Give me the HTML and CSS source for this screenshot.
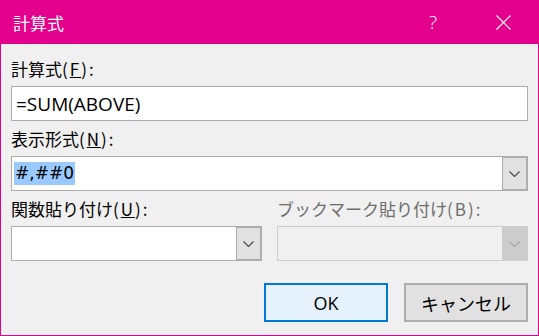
FILE: index.html
```html
<!DOCTYPE html>
<html lang="ja">
<head>
  <meta charset="UTF-8" />
  <title>計算式</title>
  <link rel="stylesheet" href="styles.css">
</head>
<body>
  <div class="dialog">
    <div class="titlebar">
      <span class="title">計算式</span>
      <div class="title-controls">
        <button class="tb-btn">?</button>
        <button class="tb-btn">
          <svg width="15" height="15" viewBox="0 0 15 15">
            <path d="M0.5 0.5 L14.5 14.5 M14.5 0.5 L0.5 14.5" stroke="#fff" stroke-width="1.2" fill="none"/>
          </svg>
        </button>
      </div>
    </div>

    <div class="content">
      <div class="field">
        <label>計算式<span class="key">(<u>F</u>):</span></label>
        <div class="textbox">=SUM(ABOVE)</div>
      </div>

      <div class="field">
        <label>表示形式<span class="key">(<u>N</u>):</span></label>
        <div class="combo">
          <div class="combo-value"><span class="selected">#,##0</span></div>
          <div class="combo-arrow">
            <svg width="11" height="6" viewBox="0 0 11 6"><path d="M0.5 0.5 L5.5 5.5 L10.5 0.5" stroke="#444" stroke-width="1.1" fill="none"/></svg>
          </div>
        </div>
      </div>

      <div class="field-row">
        <div class="field">
          <label>関数貼り付け<span class="key">(<u>U</u>):</span></label>
          <div class="combo">
            <div class="combo-value"></div>
            <div class="combo-arrow">
              <svg width="11" height="6" viewBox="0 0 11 6"><path d="M0.5 0.5 L5.5 5.5 L10.5 0.5" stroke="#444" stroke-width="1.1" fill="none"/></svg>
            </div>
          </div>
        </div>
        <div class="field disabled">
          <label>ブックマーク貼り付け<span class="key">(B):</span></label>
          <div class="combo">
            <div class="combo-value"></div>
            <div class="combo-arrow">
              <svg width="11" height="6" viewBox="0 0 11 6"><path d="M0.5 0.5 L5.5 5.5 L10.5 0.5" stroke="#a6a6a6" stroke-width="1.1" fill="none"/></svg>
            </div>
          </div>
        </div>
      </div>

      <div class="actions">
        <button class="btn btn-default">OK</button>
        <button class="btn">キャンセル</button>
      </div>
    </div>
  </div>
</body>
</html>
```

FILE: styles.css
```css
:root {
  --accent: #e3008c;
  --bg: #f0f0f0;
  --border: #adadad;
  --font-ui: "Open Sans", "Noto Sans CJK JP", sans-serif;
}

* {
  margin: 0;
  padding: 0;
  box-sizing: border-box;
}

body {
  background: var(--bg);
  font-family: var(--font-ui);
  color: #000;
}

.dialog {
  width: 539px;
  height: 336px;
  border: 1px solid var(--accent);
  border-top: none;
  background: var(--bg);
  display: flex;
  flex-direction: column;
}

.titlebar {
  height: 44px;
  background: var(--accent);
  display: flex;
  align-items: center;
  justify-content: space-between;
  padding-left: 12px;
}

.title {
  color: #fff;
  font-size: 17px;
  font-family: "Noto Sans CJK JP", sans-serif;
}

.title-controls {
  display: flex;
  height: 100%;
}

.tb-btn {
  width: 70px;
  height: 100%;
  background: transparent;
  border: none;
  color: #fff;
  font-family: "Open Sans", sans-serif;
  font-weight: 300;
  font-size: 19px;
  display: flex;
  align-items: center;
  justify-content: center;
}

.content {
  padding: 13px 10px 0;
  display: flex;
  flex-direction: column;
  gap: 6px;
}

.field {
  display: flex;
  flex-direction: column;
  gap: 5px;
}

.field label {
  font-family: "Noto Sans CJK JP", sans-serif;
  font-size: 17px;
  line-height: 24px;
  height: 24px;
  white-space: nowrap;
}

.key {
  letter-spacing: 2px;
}

.field.disabled label {
  color: #6d6d6d;
}

.textbox {
  height: 35px;
  border: 1px solid var(--border);
  background: #fff;
  padding-left: 4px;
  font-size: 19px;
  display: flex;
  align-items: center;
}

.combo {
  height: 35px;
  border: 1px solid var(--border);
  background: #fff;
  display: flex;
}

.combo-value {
  flex: 1;
  display: flex;
  align-items: center;
  padding-left: 2px;
}

.selected {
  background: #99c9ff;
  font-family: "DejaVu Sans", sans-serif;
  font-size: 17px;
  line-height: 23px;
  padding: 0 1px;
}

.combo-arrow {
  width: 26px;
  background: #e1e1e1;
  border: 1px solid var(--border);
  margin: -1px -1px -1px 0;
  border-width: 2px 2px 2px 1px;
  display: flex;
  align-items: center;
  justify-content: center;
}

.field-row {
  display: flex;
  gap: 15px;
}

.field-row .field {
  flex: 1;
}

.field.disabled .combo {
  background: var(--bg);
  border-color: #cccccc;
}

.field.disabled .combo-arrow {
  background: #cccccc;
  border-color: #cccccc;
}

.actions {
  margin-top: 16px;
  display: flex;
  justify-content: flex-end;
  gap: 16px;
}

.btn {
  width: 124px;
  height: 39px;
  background: #e1e1e1;
  border: 2px solid var(--border);
  font-family: var(--font-ui);
  font-size: 18px;
  color: #000;
}

.btn-default {
  background: #e5f1fb;
  border-color: #0078d7;
}
```
